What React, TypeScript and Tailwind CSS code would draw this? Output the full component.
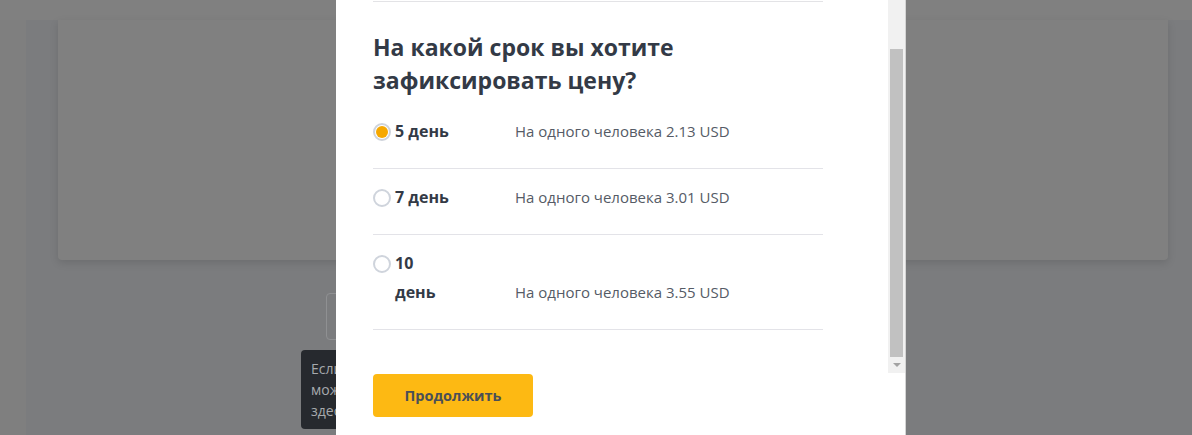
import React, { useState } from "react";

const options = [
  { id: 5, label: "5 день", price: "2.13" },
  { id: 7, label: "7 день", price: "3.01" },
  { id: 10, label: "10 день", price: "3.55" },
];

const Radio: React.FC<{ checked: boolean }> = ({ checked }) => (
  <span className="mt-[6px] flex h-[18px] w-[18px] shrink-0 items-center justify-center rounded-full border-2 border-[#cfd4dc] bg-white">
    {checked && <span className="h-[12px] w-[12px] rounded-full bg-[#f6a800]" />}
  </span>
);

const App: React.FC = () => {
  const [selected, setSelected] = useState(5);

  return (
    <div className="relative h-[435px] w-[1192px] overflow-hidden bg-[#7b7c7e] font-['Open_Sans',sans-serif]">
      {/* page behind the overlay */}
      <div className="h-[20px] bg-[#808080]" />
      <div className="flex">
        <div className="h-[415px] w-[26px] bg-[#7f7f7f]" />
        <div className="flex flex-1 flex-col pl-[32px] pr-[24px]">
          <div className="h-[240px] rounded-b-[4px] bg-[#808080] shadow-[0_3px_8px_rgba(0,0,0,0.12)]" />
          <div className="mt-[33px] flex pl-[268px]">
            <div className="h-[47px] w-[200px] rounded-[4px] border border-[#8f9092]" />
          </div>
        </div>
      </div>
      <div className="absolute left-[301px] top-[350px] w-[220px] rounded-[4px] bg-[#26292e] px-[10px] py-[8px] text-[14px] leading-[21px] text-[#a6a9ad]">
        Если вам нужна помощь,
        <br />
        можно написать нам
        <br />
        здесь
      </div>

      {/* modal */}
      <div className="absolute left-[336px] top-0 flex h-[435px] w-[570px] flex-col border-r border-[#d4d4d4] bg-white">
        <div className="flex h-[373px]">
          <div className="flex-1 overflow-hidden pl-[37px]">
            <div className="mt-[1px] h-px w-[450px] bg-[#e3e3e6]" />
            <h2 className="mt-[29px] w-[450px] text-[23px] font-bold leading-[33px] text-[#333a46]">
              На какой срок вы хотите зафиксировать цену?
            </h2>
            <div className="mt-[6px] w-[450px]">
              {options.map((o) => (
                <label
                  key={o.id}
                  onClick={() => setSelected(o.id)}
                  className="flex cursor-pointer items-end border-b border-[#e3e3e8] pb-[22px] pt-[14px]"
                >
                  <div className="flex w-[142px] items-start gap-[4px]">
                    <Radio checked={selected === o.id} />
                    <span className="w-[58px] text-[16px] font-bold leading-[29px] text-[#333a46]">{o.label}</span>
                  </div>
                  <span className="text-[15px] leading-[29px] text-[#555b66]">
                    На одного человека {o.price} USD
                  </span>
                </label>
              ))}
            </div>
          </div>
          {/* scrollbar */}
          <div className="flex w-[17px] flex-col items-center bg-[#f1f1f1]">
            <div className="mt-[49px] h-[308px] w-[13px] bg-[#c1c1c1]" />
            <div className="mt-[6px] h-0 w-0 border-x-[4px] border-t-[4px] border-x-transparent border-t-[#a3a3a3]" />
          </div>
        </div>
        <div className="pl-[37px] pt-px">
          <button className="h-[43px] w-[160px] rounded-[4px] bg-[#fdb913] text-[14.5px] font-bold text-[#4a4f57]">
            Продолжить
          </button>
        </div>
      </div>
    </div>
  );
};

export default App;
